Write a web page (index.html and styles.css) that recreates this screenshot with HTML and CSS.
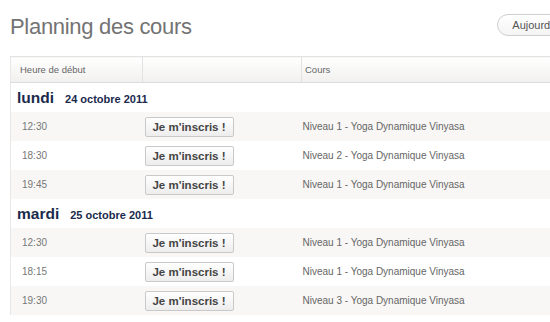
FILE: index.html
```html
<!DOCTYPE html>
<html lang="fr">
<head>
<meta charset="utf-8">
<title>Planning des cours</title>
<link rel="stylesheet" href="styles.css">
</head>
<body>
<div class="page">
  <header class="top">
    <h1 class="title">Planning des cours</h1>
    <button class="today">Aujourd'hui</button>
  </header>
  <table class="planning">
    <colgroup>
      <col class="c-time">
      <col class="c-btn">
      <col class="c-course">
    </colgroup>
    <thead>
      <tr>
        <th class="h-time">Heure de début</th>
        <th></th>
        <th class="h-course">Cours</th>
      </tr>
    </thead>
    <tbody>
      <tr class="day"><td colspan="3"><span class="dname">lundi</span><span class="ddate">24 octobre 2011</span></td></tr>
      <tr class="odd"><td class="time">12:30</td><td class="act"><button class="join">Je m'inscris !</button></td><td class="course">Niveau 1 - Yoga Dynamique Vinyasa</td></tr>
      <tr><td class="time">18:30</td><td class="act"><button class="join">Je m'inscris !</button></td><td class="course">Niveau 2 - Yoga Dynamique Vinyasa</td></tr>
      <tr class="odd"><td class="time">19:45</td><td class="act"><button class="join">Je m'inscris !</button></td><td class="course">Niveau 1 - Yoga Dynamique Vinyasa</td></tr>
      <tr class="day"><td colspan="3"><span class="dname">mardi</span><span class="ddate">25 octobre 2011</span></td></tr>
      <tr class="odd"><td class="time">12:30</td><td class="act"><button class="join">Je m'inscris !</button></td><td class="course">Niveau 1 - Yoga Dynamique Vinyasa</td></tr>
      <tr><td class="time">18:15</td><td class="act"><button class="join">Je m'inscris !</button></td><td class="course">Niveau 1 - Yoga Dynamique Vinyasa</td></tr>
      <tr class="odd"><td class="time">19:30</td><td class="act"><button class="join">Je m'inscris !</button></td><td class="course">Niveau 3 - Yoga Dynamique Vinyasa</td></tr>
    </tbody>
  </table>
</div>
</body>
</html>
```
FILE: styles.css
```css
html, body {
  margin: 0;
  padding: 0;
  background: #fff;
  overflow: hidden;
}
body {
  font-family: "Liberation Sans", Arial, Helvetica, sans-serif;
  color: #666;
}
.page {
  width: 572px;
  padding-left: 10px;
}
.top {
  display: flex;
  justify-content: space-between;
  align-items: flex-start;
  height: 56px;
}
.title {
  margin: 0;
  padding-top: 14px;
  font-size: 22px;
  line-height: 26px;
  font-weight: normal;
  letter-spacing: -0.3px;
  color: #737373;
}
.today {
  margin-top: 14px;
  height: 22px;
  padding: 0 14px;
  border: 1px solid #cfcfcf;
  border-radius: 11px;
  background: linear-gradient(#ffffff, #f4f4f4);
  font-family: inherit;
  font-size: 11px;
  color: #555;
  white-space: nowrap;
}
.planning {
  width: 600px;
  border-collapse: collapse;
  table-layout: fixed;
  border-left: 1px solid #e8e8e8;
}
.c-time { width: 132px; }
.c-btn { width: 159px; }
.planning th {
  height: 25px;
  padding: 0;
  text-align: left;
  font-weight: normal;
  font-size: 9.5px;
  color: #666;
  background: linear-gradient(#ffffff, #f1f0ee);
  border-top: 1px solid #e2e2e2;
  border-bottom: 1px solid #dcdcdc;
  border-right: 1px solid #e2e2e2;
}
.planning th.h-time { padding-left: 9px; }
.planning th.h-course { padding-left: 3px; }
.planning td {
  height: 29px;
  padding: 0;
  vertical-align: middle;
  font-size: 10px;
}
.planning tr.odd td { background: #f8f7f5; }
.day td {
  padding-left: 6px;
  background: #fff;
  white-space: nowrap;
}
.dname {
  font-size: 15.5px;
  font-weight: bold;
  color: #1a2a4c;
  margin-right: 11px;
}
.ddate {
  font-size: 11px;
  font-weight: bold;
  color: #1a2a4c;
}
.time {
  padding-left: 11px !important;
  color: #777;
}
.act { padding-left: 2px !important; }
.course {
  padding-left: 1px !important;
  color: #666;
}
.join {
  display: block;
  width: 89px;
  height: 20px;
  padding: 0;
  border: 1px solid #c9c9c9;
  border-radius: 2px;
  background: linear-gradient(#ffffff, #ededed);
  font-family: inherit;
  font-size: 11.5px;
  font-weight: bold;
  color: #444;
  white-space: nowrap;
}
```
